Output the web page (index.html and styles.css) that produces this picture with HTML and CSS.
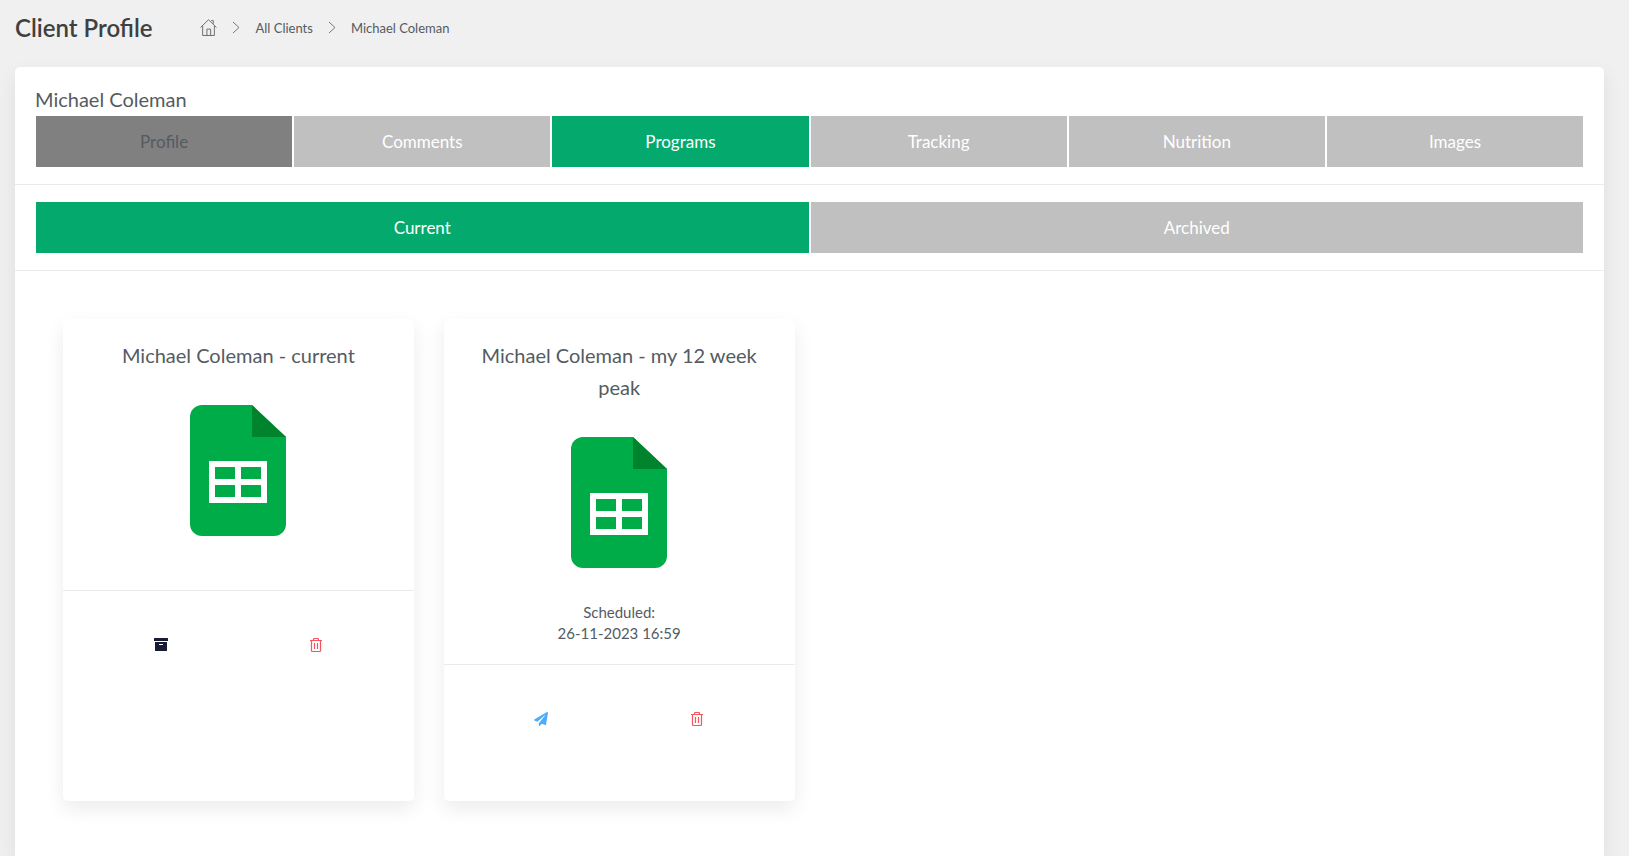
FILE: index.html
```html
<!DOCTYPE html>
<html lang="en">
<head>
  <meta charset="UTF-8" />
  <meta name="viewport" content="width=device-width, initial-scale=1" />
  <title>Client Profile</title>
  <link rel="stylesheet" href="styles.css">
</head>
<body>
  <!-- shared icons -->
  <svg class="icon-defs" aria-hidden="true">
    <symbol id="icon-sheet" viewBox="0 0 96 131">
      <path fill="#00ac47" d="M12 0h50l34 32v87a12 12 0 0 1-12 12H12a12 12 0 0 1-12-12V12A12 12 0 0 1 12 0z" />
      <path fill="#00832d" d="M62 0v32h34z" />
      <path fill="#fff" fill-rule="evenodd" d="M19 56h58v42H19zM25 62v12h20V62zM51 62v12h20V62zM25 80v12h20V80zM51 80v12h20V80z" />
    </symbol>
    <symbol id="icon-trash" viewBox="0 0 14 14">
      <path fill="none" stroke="currentColor" stroke-width="1.2" d="M1 2.5h12M4.5 2.5v-1a1 1 0 0 1 1-1h3a1 1 0 0 1 1 1v1M2.500 2.500v10a1 1 0 0 0 1 1h7a1 1 0 0 0 1-1v-10M5.500 5v6M8.500 5v6" />
    </symbol>
    <symbol id="icon-archive" viewBox="0 0 14 14">
      <path fill="currentColor" fill-rule="evenodd" d="M.5 0h13a.5.5 0 0 1 .5.500V3H0V.500A.5.5 0 0 1 .5 0zM1 4h12v8.500a.5.5 0 0 1-.5.500h-11a.5.5 0 0 1-.5-.5zM5 6v1h4V6z" />
    </symbol>
    <symbol id="icon-send" viewBox="0 0 512 512">
      <path fill="currentColor" d="M476 3.200L12.500 270.600c-18.100 10.400-15.800 35.600 2.200 43.200L121 358.400l287.300-253.200c5.500-4.900 13.300 2.600 8.600 8.300L176 407v80.500c0 23.600 28.500 32.900 42.500 15.800L282 426l124.600 52.200c14.200 6 30.400-2.900 33-18.200l72-432C515 7.800 493.300-6.800 476 3.200z" />
    </symbol>
    <symbol id="icon-home" viewBox="0 0 16 16">
      <path fill="none" stroke="currentColor" stroke-width=".8" d="M.5 8L8 .7 15.500 8M2.500 6.500v9h11v-9M6.500 15.500v-6h3.500v6M10.500 1.500h2v3" />
    </symbol>
    <symbol id="icon-chevron" viewBox="0 0 8 12">
      <path fill="none" stroke="currentColor" stroke-width=".8" d="M1 .5L7 6l-6 5.500" />
    </symbol>
  </svg>

  <header class="page-header">
    <h1>Client Profile</h1>
    <nav class="breadcrumb" aria-label="Breadcrumb">
      <a href="#" aria-label="Home"><svg class="home"><use href="#icon-home" /></svg></a>
      <svg class="chevron"><use href="#icon-chevron" /></svg>
      <a href="#">All Clients</a>
      <svg class="chevron"><use href="#icon-chevron" /></svg>
      <a href="#">Michael Coleman</a>
    </nav>
  </header>

  <main class="panel">
    <section class="panel-section">
      <h2>Michael Coleman</h2>
      <div class="tabs">
        <button type="button" class="tab tab-dark">Profile</button>
        <button type="button" class="tab">Comments</button>
        <button type="button" class="tab active">Programs</button>
        <button type="button" class="tab">Tracking</button>
        <button type="button" class="tab">Nutrition</button>
        <button type="button" class="tab">Images</button>
      </div>
    </section>

    <section class="panel-section">
      <div class="tabs">
        <button type="button" class="tab active">Current</button>
        <button type="button" class="tab">Archived</button>
      </div>
    </section>

    <section class="programs">
      <article class="card">
        <div class="card-body">
          <h3>Michael Coleman - current</h3>
          <svg class="sheet"><use href="#icon-sheet" /></svg>
        </div>
        <div class="card-actions">
          <button type="button" class="archive" aria-label="Archive"><svg><use href="#icon-archive" /></svg></button>
          <button type="button" class="delete" aria-label="Delete"><svg><use href="#icon-trash" /></svg></button>
        </div>
      </article>

      <article class="card">
        <div class="card-body">
          <h3>Michael Coleman - my 12 week peak</h3>
          <svg class="sheet"><use href="#icon-sheet" /></svg>
          <p>Scheduled:<br />26-11-2023 16:59</p>
        </div>
        <div class="card-actions">
          <button type="button" class="send" aria-label="Send now"><svg><use href="#icon-send" /></svg></button>
          <button type="button" class="delete" aria-label="Delete"><svg><use href="#icon-trash" /></svg></button>
        </div>
      </article>
    </section>
  </main>
</body>
</html>
```
FILE: styles.css
```css
* {
  box-sizing: border-box;
}
body {
  margin: 0;
  padding: 0 25px 0 15px;
  min-height: 100vh;
  display: flex;
  flex-direction: column;
  background: #f0f0f0;
  color: #545b62;
  font-family: Lato, sans-serif;
  font-size: 15px;
}
h1, h2, h3, p {
  margin: 0;
}
.icon-defs {
  display: none;
}
.page-header {
  display: flex;
  align-items: center;
  height: 55px;
  margin-bottom: 12px;
}
h1 {
  color: #404040;
  font-size: 24px;
  font-weight: 600;
}
.breadcrumb {
  display: flex;
  align-items: center;
  gap: 15px;
  margin-left: 48px;
}
.breadcrumb a {
  color: #545b62;
  font-size: 13px;
  text-decoration: none;
}
.breadcrumb svg {
  display: block;
}
.home {
  width: 17px;
  height: 17px;
}
.chevron {
  width: 8px;
  height: 13px;
}
.panel {
  flex: 1;
  background: #fff;
  border-radius: 5px 5px 0 0;
  box-shadow: 0 8px 20px rgba(0, 0, 0, 0.08);
}
.panel-section {
  padding: 17px 20px;
  border-bottom: 1px solid #ebebeb;
}
h2, h3 {
  font-size: 20px;
  font-weight: 400;
  line-height: 32px;
}
h2 {
  line-height: 30px;
  margin-bottom: 2px;
}
.tabs {
  display: flex;
  gap: 2px;
  padding: 0 1px;
}
.tab {
  flex: 1;
  height: 51px;
  padding: 0;
  border: 0;
  background: #c0c0c0;
  color: #fff;
  font: 17px Lato, sans-serif;
  cursor: pointer;
}
.tab-dark {
  background: #808080;
  color: #545b62;
}
.tab.active {
  background: #04aa6d;
}
.programs {
  display: grid;
  grid-template-columns: repeat(4, 1fr);
  gap: 30px;
  padding: 48px;
}
.card {
  min-height: 482px;
  background: #fff;
  border-radius: 5px;
  box-shadow: 0 8px 20px rgba(0, 0, 0, 0.08);
}
.card-body {
  padding: 20px;
  border-bottom: 1px solid #ebebeb;
  text-align: center;
}
.sheet {
  display: block;
  width: 96px;
  height: 131px;
  margin: 34px auto;
}
.card-body p {
  line-height: 21px;
}
.card-actions {
  display: grid;
  grid-template-columns: 1fr 1fr;
  justify-items: center;
  padding: 39px 20px;
}
.card-actions button {
  padding: 8px;
  border: 0;
  background: none;
  cursor: pointer;
}
.card-actions svg {
  display: block;
  width: 14px;
  height: 14px;
}
.archive {
  color: #181c32;
}
.send {
  color: #4dabf7;
}
.delete {
  color: #f5555d;
}
```
